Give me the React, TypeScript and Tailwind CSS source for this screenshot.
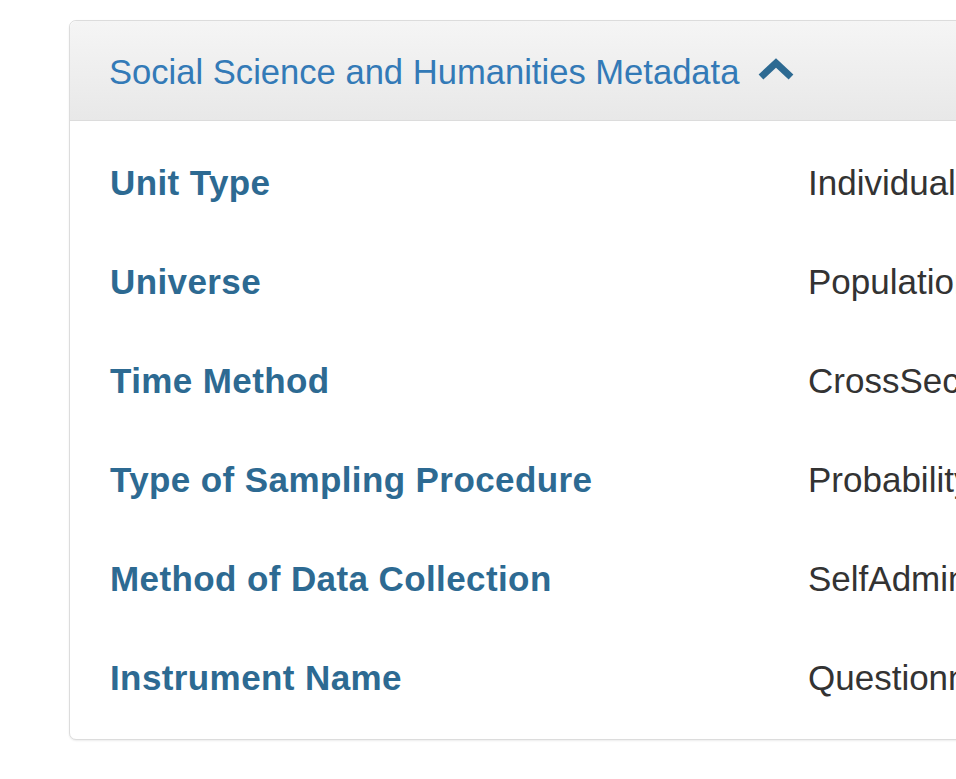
const rows: [string, string][] = [
  ['Unit Type', 'Individual'],
  ['Universe', 'Population'],
  ['Time Method', 'CrossSection'],
  ['Type of Sampling Procedure', 'Probability'],
  ['Method of Data Collection', 'SelfAdministeredQuestionnaire'],
  ['Instrument Name', 'Questionnaire'],
]

function ChevronUp() {
  return (
    <svg width="36" height="24" viewBox="0 0 36 24" className="ml-[19px] mt-[-4px]">
      <polyline points="3,19 18,5 33,19" fill="none" stroke="#2d6a92" strokeWidth="7" strokeLinejoin="miter" />
    </svg>
  )
}

export default function App() {
  return (
    <div className="w-[956px] h-[779px] overflow-hidden bg-white" style={{ fontFamily: '"Liberation Sans", Arial, sans-serif' }}>
      <div className="pl-[69px] pt-[20px]">
        <div className="w-[1200px] rounded-[7px] border border-[#dcdcdc] bg-white shadow-[0_1px_2px_rgba(0,0,0,0.08)]">
          <div className="h-[100px] flex items-center pl-[39px] pt-[3px] rounded-t-[7px] border-b border-[#dcdcdc] bg-gradient-to-b from-[#f5f5f5] to-[#e8e8e8]">
            <span className="text-[34.6px] text-[#337ab7] leading-none">Social Science and Humanities Metadata</span>
            <ChevronUp />
          </div>
          <div className="pt-[13px] pb-[11px] pl-[40px]">
            {rows.map(([label, value]) => (
              <div key={label} className="flex items-center h-[99px]">
                <div className="w-[698px] shrink-0 text-[35px] font-bold tracking-[0.4px] text-[#2d6a92]">{label}</div>
                <div className="text-[35px] text-[#333333] whitespace-nowrap">{value}</div>
              </div>
            ))}
          </div>
        </div>
      </div>
    </div>
  )
}
